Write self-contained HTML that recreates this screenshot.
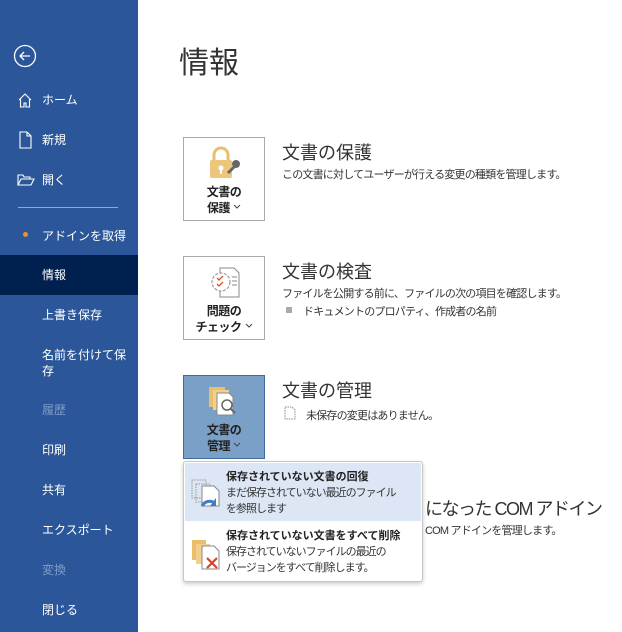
<!DOCTYPE html>
<html><head><meta charset="utf-8"><style>
*{margin:0;padding:0;box-sizing:border-box}
body{width:622px;height:632px;overflow:hidden;background:#fff;font-family:"Liberation Sans","Noto Sans CJK JP",sans-serif;position:relative;color:#222}
.side{position:absolute;left:0;top:0;width:138px;height:632px;background:#2b579a;color:#fff}
.it{position:absolute;left:42px;font-size:12px;line-height:16px}
.dim{color:#7f9bc6}
.sel{position:absolute;left:0;top:255px;width:138px;height:40px;background:#002050}
.a{position:absolute}
h1{position:absolute;left:179px;top:38px;font-size:30px;font-weight:normal;color:#333}
.box{position:absolute;left:183px;width:82px;height:84px;border:1px solid #ababab;background:#fff;text-align:center;font-size:12px;font-weight:bold;line-height:16px;letter-spacing:-0.5px}
.h{position:absolute;left:282px;font-size:18px;color:#333;white-space:nowrap}
.d{position:absolute;left:282px;font-size:11px;letter-spacing:-0.8px;color:#333;white-space:nowrap}
.menu{position:absolute;left:183px;top:461px;width:240px;height:121px;border:1px solid #c6c6c6;border-radius:3px;background:#fff;box-shadow:0 2px 4px rgba(0,0,0,.2)}
.mt{position:absolute;left:42px;font-size:11px;font-weight:bold;color:#222;white-space:nowrap}
.md{position:absolute;left:42px;font-size:11px;letter-spacing:-1px;line-height:16px;color:#333;white-space:nowrap}
.cv{display:inline-block;width:8px;height:6px;margin-left:3px;vertical-align:2px}
</style></head><body>
<div class="side">
<svg class="a" style="left:13px;top:44px" width="24" height="24"><circle cx="12" cy="12" r="10.5" fill="none" stroke="#fff" stroke-width="1.3"/><path d="M17 12H7M11 8l-4 4 4 4" fill="none" stroke="#fff" stroke-width="1.3"/></svg>
<svg class="a" style="left:17px;top:92px" width="16" height="16"><path d="M2 8L8 2l6 6M3.5 7v8h3.5v-4h2v4h3.5V7" fill="none" stroke="#fff" stroke-width="1.1"/></svg>
<div class="it" style="top:92px">ホーム</div>
<svg class="a" style="left:19px;top:131px" width="14" height="18"><path d="M1 1h7l4 4v12H1z M8 1v4h4" fill="none" stroke="#fff" stroke-width="1.1"/></svg>
<div class="it" style="top:132px">新規</div>
<svg class="a" style="left:17px;top:174px" width="18" height="12"><path d="M1 11V1h5l1 2h6v2M1 11l3-6h13l-3 6z" fill="none" stroke="#fff" stroke-width="1.1"/></svg>
<div class="it" style="top:172px">開く</div>
<div class="a" style="left:18px;top:207px;width:100px;height:1px;background:#8fa9d2"></div>
<div class="a" style="left:23px;top:232px;width:5px;height:5px;border-radius:50%;background:#e8912e"></div>
<div class="it" style="top:228px">アドインを取得</div>
<div class="sel"></div>
<div class="it" style="top:267px">情報</div>
<div class="it" style="top:307px">上書き保存</div>
<div class="it" style="top:347px;width:86px">名前を付けて保存</div>
<div class="it dim" style="top:402px">履歴</div>
<div class="it" style="top:442px">印刷</div>
<div class="it" style="top:482px">共有</div>
<div class="it" style="top:522px">エクスポート</div>
<div class="it dim" style="top:562px">変換</div>
<div class="it" style="top:602px">閉じる</div>
</div>
<h1>情報</h1>

<div class="box" style="top:137px"><svg style="margin-top:8px" width="36" height="34"><path d="M8 14V9a7 7 0 0 1 14 0v5" fill="none" stroke="#e9be6c" stroke-width="3"/><rect x="4" y="14" width="22" height="18" rx="2" fill="#edc57b"/><circle cx="15" cy="22" r="2.5" fill="#fff"/><rect x="14" y="23" width="2" height="5" fill="#fff"/><path d="M22 27l7-7" stroke="#666" stroke-width="3"/><circle cx="30" cy="18" r="4" fill="#666"/></svg><div>文書の<br>保護<svg class="cv"><path d="M1 1l3 3 3-3" fill="none" stroke="#444"/></svg></div></div>
<div class="h" style="top:139px">文書の保護</div>
<div class="d" style="top:166px">この文書に対してユーザーが行える変更の種類を管理します。</div>

<div class="box" style="top:256px"><svg style="margin-top:8px" width="36" height="34"><path d="M14 3h14l5 5v24H14z" fill="#fff" stroke="#888"/><path d="M26 12h5M26 16h5M26 20h5" stroke="#888"/><circle cx="15" cy="17" r="9" fill="#fff" stroke="#888" stroke-dasharray="3 1.5"/><path d="M11 13l2 2 4-4M11 19l2 2 4-4" fill="none" stroke="#d9542b" stroke-width="1.3"/></svg><div>問題の<br>チェック<svg class="cv"><path d="M1 1l3 3 3-3" fill="none" stroke="#444"/></svg></div></div>
<div class="h" style="top:258px">文書の検査</div>
<div class="d" style="top:285px">ファイルを公開する前に、ファイルの次の項目を確認します。</div>
<div class="a" style="left:286px;top:307px;width:6px;height:6px;background:#aaa"></div>
<div class="d" style="top:303px;left:303px">ドキュメントのプロパティ、作成者の名前</div>

<div class="box" style="top:375px;background:#7aa0c8;border-color:#41699e"><svg style="margin-top:8px" width="36" height="34"><rect x="3" y="3" width="16" height="20" fill="#e9be6c"/><rect x="7" y="6" width="16" height="20" fill="#f2d08c"/><path d="M11 9h12l4 4v18H11z" fill="#fff" stroke="#888"/><circle cx="21" cy="21" r="5" fill="#fff" stroke="#666" stroke-width="1.5"/><path d="M25 25l4 4" stroke="#666" stroke-width="2"/></svg><div>文書の<br>管理<svg class="cv"><path d="M1 1l3 3 3-3" fill="none" stroke="#444"/></svg></div></div>
<div class="h" style="top:377px">文書の管理</div>
<svg class="a" style="left:284px;top:406px" width="12" height="14"><path d="M1 1h7l3 3v9H1z" fill="none" stroke="#888" stroke-dasharray="1.5 1"/></svg>
<div class="d" style="top:407px;left:306px">未保存の変更はありません。</div>

<div class="h" style="top:495px;left:425px;letter-spacing:-1.5px">になった COM アドイン</div>
<div class="d" style="top:522px;left:425px">COM アドインを管理します。</div>

<div class="menu">
<div class="a" style="left:1px;top:1px;width:236px;height:58px;background:#dce6f4"></div>
<svg class="a" style="left:6px;top:16px" width="32" height="32"><rect x="2" y="2" width="14" height="18" fill="none" stroke="#999" stroke-dasharray="1.5 1"/><rect x="6" y="6" width="14" height="18" fill="none" stroke="#999" stroke-dasharray="1.5 1"/><path d="M12 8h12l5 5v15H12z" fill="#fff" stroke="#888"/><path d="M12 28c3-5 8-6 13-3" fill="none" stroke="#3d7cc9" stroke-width="3"/><path d="M26 20v8h-6z" fill="#3d7cc9"/></svg>
<div class="mt" style="top:6px">保存されていない文書の回復</div>
<div class="md" style="top:23px">まだ保存されていない最近のファイル<br>を参照します</div>
<svg class="a" style="left:6px;top:76px" width="32" height="34"><rect x="2" y="2" width="14" height="20" fill="#e9be6c"/><rect x="6" y="6" width="14" height="20" fill="#f2d08c"/><path d="M12 8h12l5 5v18H12z" fill="#fff" stroke="#888"/><path d="M17 20l10 10M27 20L17 30" stroke="#d9432b" stroke-width="2.2"/></svg>
<div class="mt" style="top:65px">保存されていない文書をすべて削除</div>
<div class="md" style="top:82px">保存されていないファイルの最近の<br>バージョンをすべて削除します。</div>
</div>
</body></html>
